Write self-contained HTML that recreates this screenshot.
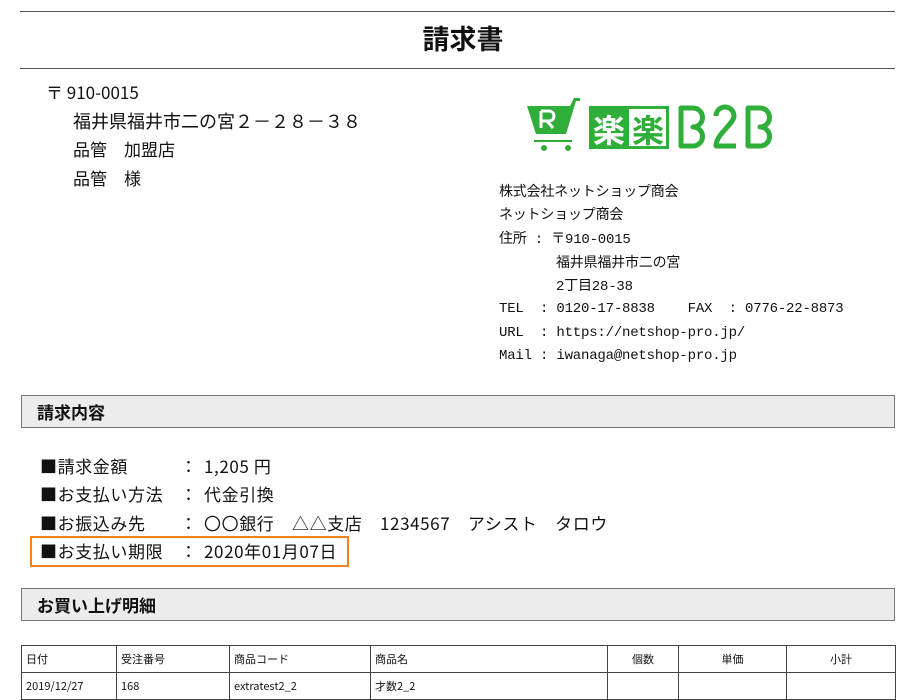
<!DOCTYPE html>
<html><head><meta charset="utf-8"><style>
body{margin:0;width:906px;height:686px;overflow:hidden;background:#fff;font-family:"Noto Sans CJK JP","Liberation Sans",sans-serif;color:#111;position:relative}
.a{position:absolute;white-space:pre}
.hl{position:absolute;left:20px;width:875px;height:1px;background:#555}
.sec{position:absolute;left:21px;width:874px;height:33px;background:#ececec;border:1px solid #777;font-weight:bold;font-size:17px;line-height:31px;padding-left:15px;box-sizing:border-box}
.co{font-size:14px;font-family:"Liberation Mono","Noto Sans CJK JP",monospace;letter-spacing:-0.2px}
.l{font-size:17px;letter-spacing:0.6px}
table{position:absolute;left:21px;top:645px;border-collapse:collapse;font-size:11px;table-layout:fixed;width:874px}
td{border:1px solid #444;height:26px;padding:0 4px;vertical-align:middle;overflow:hidden;white-space:nowrap}
</style></head><body>
<div class="hl" style="top:11px"></div>
<div class="a" style="left:0;width:926px;text-align:center;top:18px;font-size:27px;font-weight:bold">請求書</div>
<div class="hl" style="top:68px"></div>
<div class="a" style="left:46px;top:79px;font-size:17px">〒 910-0015</div>
<div class="a" style="left:73px;top:108px;font-size:18px">福井県福井市二の宮２－２８－３８</div>
<div class="a" style="left:73px;top:136px;font-size:17px">品管　加盟店</div>
<div class="a" style="left:73px;top:165px;font-size:17px">品管　様</div>
<svg class="a" style="left:526px;top:96px" width="250" height="56" viewBox="0 0 250 56">
<g fill="#2fae3a">
<path d="M1 10h43l4-8h6v3h-4l-10 33H10z"/>
<circle cx="18" cy="52" r="3"/><circle cx="42" cy="52" r="3"/>
<rect x="8" y="44" width="38" height="2"/>
<rect x="63" y="10" width="80" height="43"/>
</g>
<rect x="103" y="13" width="37" height="37" fill="#fff"/>
<path d="M15 15v17M15 15h8a5 5 0 0 1 0 10h-8M21 25l6 7" stroke="#fff" stroke-width="3" fill="none"/>
<text x="83" y="46" font-size="32" fill="#fff" text-anchor="middle" font-family="Noto Sans CJK JP" font-weight="bold">楽</text>
<text x="122" y="46" font-size="32" fill="#2fae3a" text-anchor="middle" font-family="Noto Sans CJK JP" font-weight="bold">楽</text>
<g stroke="#2fae3a" stroke-width="5" fill="none" stroke-linejoin="round">
<path d="M155 12v38h12a9 9 0 0 0 0-19 8 8 0 0 0 0-19z"/>
<path d="M190 20a9 9 0 0 1 18 0c0 8-18 18-18 30h20"/>
<path d="M222 12v38h12a9 9 0 0 0 0-19 8 8 0 0 0 0-19z"/>
</g>
</svg>
<div class="a co" style="left:499px;top:181px">株式会社ネットショップ商会</div>
<div class="a co" style="left:499px;top:204px">ネットショップ商会</div>
<div class="a co" style="left:499px;top:228px">住所 : 〒910-0015</div>
<div class="a co" style="left:556px;top:252px">福井県福井市二の宮</div>
<div class="a co" style="left:556px;top:275px">2丁目28-38</div>
<div class="a co" style="left:499px;top:301px">TEL  : 0120-17-8838    FAX  : 0776-22-8873</div>
<div class="a co" style="left:499px;top:325px">URL  : https://netshop-pro.jp/</div>
<div class="a co" style="left:499px;top:348px">Mail : iwanaga@netshop-pro.jp</div>
<div class="sec" style="top:395px">請求内容</div>
<div class="a l" style="left:40px;top:453px">■請求金額</div><div class="a l" style="left:180px;top:453px">：</div><div class="a l" style="left:204px;top:453px">1,205 円</div>
<div class="a l" style="left:40px;top:481px">■お支払い方法</div><div class="a l" style="left:180px;top:481px">：</div><div class="a l" style="left:204px;top:481px">代金引換</div>
<div class="a l" style="left:40px;top:510px">■お振込み先</div><div class="a l" style="left:180px;top:510px">：</div><div class="a l" style="left:204px;top:510px">〇〇銀行　△△支店　1234567　アシスト　タロウ</div>
<div class="a l" style="left:40px;top:538px">■お支払い期限</div><div class="a l" style="left:180px;top:538px">：</div><div class="a l" style="left:204px;top:538px">2020年01月07日</div>
<div class="a" style="left:30px;top:536px;width:315px;height:27px;border:2.5px solid #f0821e"></div>
<div class="sec" style="top:588px">お買い上げ明細</div>
<table>
<colgroup><col style="width:95px"><col style="width:113px"><col style="width:141px"><col style="width:237px"><col style="width:71px"><col style="width:108px"><col style="width:109px"></colgroup>
<tr><td>日付</td><td>受注番号</td><td>商品コード</td><td>商品名</td><td style="text-align:center">個数</td><td style="text-align:center">単価</td><td style="text-align:center">小計</td></tr>
<tr><td>2019/12/27</td><td>168</td><td>extratest2_2</td><td>才数2_2</td><td></td><td></td><td></td></tr>
</table>
</body></html>
